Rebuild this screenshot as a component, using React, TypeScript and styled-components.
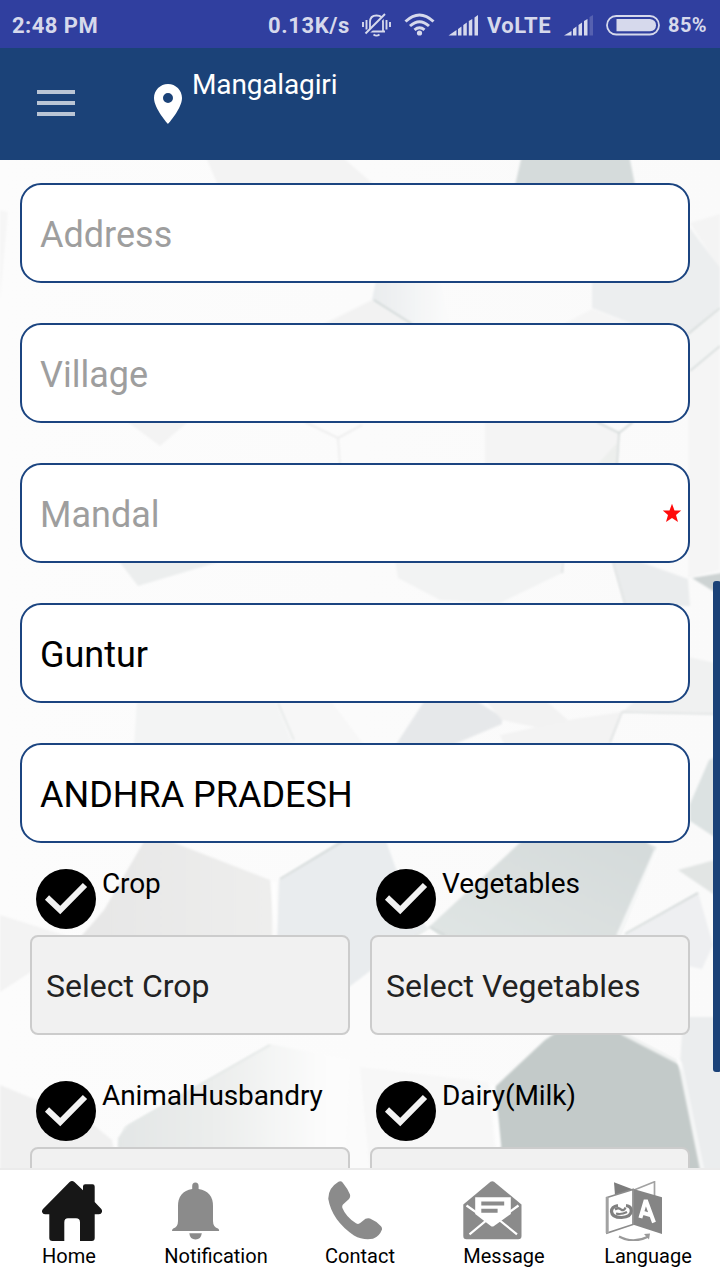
import React from "react";
import styled, { createGlobalStyle } from "styled-components";

const GlobalStyle = createGlobalStyle`
  * { box-sizing: border-box; }
  body { margin: 0; background: #fff; font-family: Roboto, "Liberation Sans", sans-serif; }
`;

const Screen = styled.div`
  width: 720px;
  height: 1280px;
  display: flex;
  flex-direction: column;
  overflow: hidden;
`;

const StatusBar = styled.header`
  height: 48px;
  flex: none;
  display: flex;
  align-items: center;
  padding: 2px 12px 0;
  background: #303f9f;
  color: #d6d9ec;
`;

const StatusText = styled.span<{ $size?: number; $width: number; $spacing?: number }>`
  flex: none;
  width: ${(p) => p.$width}px;
  font-size: ${(p) => p.$size ?? 22}px;
  font-weight: 700;
  letter-spacing: ${(p) => p.$spacing ?? 0.45}px;
  white-space: nowrap;
`;

const StatusIcons = styled.svg`
  flex: none;
  display: block;
  margin-top: -2px;
`;

const Spacer = styled.div`
  flex: 1;
`;

const AppBar = styled.div`
  height: 112px;
  flex: none;
  display: flex;
  align-items: flex-start;
  padding-left: 37px;
  background: #1b4278;
  color: #fff;
`;

const MenuButton = styled.div`
  display: flex;
  flex-direction: column;
  gap: 7px;
  width: 38px;
  margin-top: 42px;
`;

const MenuLine = styled.span`
  height: 4px;
  background: #bac5d5;
`;

const Pin = styled.svg`
  margin: 32px 0 0 69px;
`;

const Place = styled.span`
  font-size: 28px;
  line-height: 34px;
  margin-top: 20px;
  letter-spacing: -0.15px;
`;

const Content = styled.main`
  position: relative;
  flex: 1;
  min-height: 0;
  overflow: hidden;
  background: #fbfbfb;
`;

const Backdrop = styled.svg`
  position: absolute;
  inset: 0;
`;

const Form = styled.div`
  position: relative;
  padding: 23px 30px 0 20px;
`;

const Fields = styled.div`
  display: flex;
  flex-direction: column;
  gap: 40px;
`;

const Field = styled.div<{ $filled?: boolean }>`
  height: 100px;
  display: flex;
  align-items: center;
  justify-content: space-between;
  padding: 0 6px 0 18px;
  border: 2px solid #1b4480;
  border-radius: 21px;
  background: #fff;
  font-size: 36px;
  line-height: 42px;
  color: ${(p) => (p.$filled ? "#000" : "#9e9e9e")};

  span { margin-top: 4px; }
`;

const Options = styled.div`
  display: grid;
  grid-template-columns: 320px 320px;
  column-gap: 20px;
  row-gap: 46px;
  padding: 26px 0 0 10px;
`;

const OptionHead = styled.div`
  display: flex;
  align-items: flex-start;
  gap: 6px;
  height: 66px;
  padding-left: 6px;
  font-size: 28px;
  line-height: 30px;
  letter-spacing: -0.1px;
  color: #000;
`;

const Select = styled.div`
  height: 100px;
  display: flex;
  align-items: center;
  padding: 2px 14px 0;
  border: 2px solid #ccc;
  border-radius: 8px;
  background: #f1f1f1;
  color: #222;
  font-size: 32px;
`;

const ScrollThumb = styled.div`
  position: absolute;
  right: -1px;
  top: 421px;
  width: 8px;
  height: 491px;
  border-radius: 3px;
  background: #1b4278;
`;

const NavBar = styled.nav`
  height: 112px;
  flex: none;
  display: grid;
  grid-template-columns: repeat(5, 144px);
  justify-items: center;
  padding-top: 11px;
  border-top: 2px solid #ebebeb;
  background: #fff;
`;

const NavItem = styled.div`
  display: flex;
  flex-direction: column;
  align-items: flex-start;
  gap: 3px;
  font-size: 20px;
  line-height: 24px;
  color: #000;
`;

function Facets() {
  return (
    <Backdrop width="720" height="1008" viewBox="0 160 720 1008">
      <defs>
        <linearGradient id="fade" x1="0" x2="1">
          <stop offset="0" stopColor="#e3e6e6" />
          <stop offset="0.4" stopColor="#ebedec" />
          <stop offset="0.9" stopColor="#fcfcfc" />
        </linearGradient>
        <linearGradient id="cool" x1="0" x2="1">
          <stop offset="0" stopColor="#e9ecee" />
          <stop offset="1" stopColor="#fbfbfb" />
        </linearGradient>
        <linearGradient id="base" x1="0" x2="1">
          <stop offset="0" stopColor="#fcfcfc" />
          <stop offset="1" stopColor="#fafafa" />
        </linearGradient>
        <linearGradient id="veg" x1="0" x2="1" y1="1" y2="0">
          <stop offset="0" stopColor="#e0e5e4" />
          <stop offset="1" stopColor="#d4dada" />
        </linearGradient>
        <linearGradient id="crop" x1="0" x2="1">
          <stop offset="0" stopColor="#e6e6e6" />
          <stop offset="1" stopColor="#eeeeed" />
        </linearGradient>
        <filter id="soft"><feGaussianBlur stdDeviation="0.9" /></filter>
      </defs>
      <rect y="160" width="720" height="1008" fill="url(#base)" />
      <g filter="url(#soft)">
        <path d="M205 155H340L380 190H220Z" fill="#f3f3f3" />
        <path d="M522 155H629L636 190H514Z" fill="#d5dbdb" />
        <path d="M690 223L720 214V270Z" fill="#f4f4f4" />
        <path d="M592 270L690 228L720 268V307L686 338L630 323L592 308Z" fill="#eceeef" />
        <path d="M686 338L720 307V346L688 373Z" fill="#f3f4f4" />
        <path d="M560 326L592 309L635 326Z" fill="#f5f5f5" />
        <path d="M688 373L720 346V570L688 578Z" fill="#f5f5f5" />
        <path d="M376 280H440L450 326H412L372 300Z" fill="url(#cool)" />
        <path d="M320 326L372 300L412 326Z" fill="#f2f2f2" />
        <path d="M0 210L8 212L0 300Z" fill="#f6f6f6" />
        <path d="M485 420H595L619 433L617 465H485Z" fill="#f4f4f4" />
        <path d="M597 465L617 443V465Z" fill="#edefed" />
        <path d="M125 420H190L160 446Z" fill="#f3f3f3" />
        <path d="M118 560H225L138 586Z" fill="#eceeee" />
        <path d="M395 560H562L564 572L500 603L440 600L398 578Z" fill="#f2f3f3" />
        <path d="M612 560H635L688 579L690 606H625Z" fill="#eaeced" />
        <path d="M692 578L722 573V596L713 591Z" fill="#cdd3d3" />
        <path d="M688 657L720 664V714L622 712Z" fill="#f0f1f1" />
        <path d="M425 700H475L502 717V724L450 746H395Z" fill="#e6e8ea" />
        <path d="M485 700H545L568 720L545 729L502 720Z" fill="#f2f2f2" />
        <path d="M568 720L622 712L610 746H505L500 735Z" fill="#f3f3f3" />
        <path d="M137 700H275L293 746H134Z" fill="#f3f4f4" />
        <path d="M275 700H330L365 746H293Z" fill="#f7f7f7" />
        <path d="M690 804L709 760L722 754V842L690 821Z" fill="#dce2e2" />
        <path d="M146 838H162L270 880L276 940H78L104 910Z" fill="url(#crop)" />
        <path d="M279 880L345 838H385L400 880L427 928L345 990V940H277Z" fill="#e9ecee" />
        <path d="M525 838H640L656 850L618 940H445L429 927Z" fill="url(#veg)" />
        <path d="M678 870L722 858V900Z" fill="#e2e5e4" />
        <path d="M620 938L698 892L713 945L702 969L688 966Z" fill="#eeeff1" />
        <path d="M683 1017H722V1170H700L680 1065Z" fill="#ebedee" />
        <path d="M545 1040L560 1030H618L676 1060L682 1072L702 1172H503L495 1087Z" fill="#c3cac9" />
        <path d="M270 1044L128 1125L118 1138V1172H345L350 1060Z" fill="url(#fade)" />
        <path d="M0 1085L90 1122L112 1140L118 1172H0Z" fill="#f0f0f0" />
        <path d="M0 915L80 940L0 992Z" fill="#f3f3f3" />
        <path d="M360 1067L488 1082L497 1172H370Z" fill="#f7f7f7" />
      </g>
      <g fill="none" stroke="#d3d9d8" strokeWidth="1.6" filter="url(#soft)">
        <path d="M374 300L412 324M720 308L688 334M720 346L690 371" />
        <path d="M597 422L619 433L633 422M619 433L617 465" />
        <path d="M305 422L338 438L362 425M338 438L340 465" stroke="#ececec" />
        <path d="M613 562L625 604M563 562L562 573M610 742L622 712L716 714" stroke="#dfe2e2" />
        <path d="M280 879L345 840M430 927L445 935M656 848L640 842M625 934L698 893" />
        <path d="M415 936L430 927M270 1045L125 1128L119 1146M278 703L294 740" stroke="#e4e8e7" />
      </g>
      <g fill="none" stroke="#fff" strokeWidth="4" strokeOpacity="0.7" filter="url(#soft)">
        <path d="M274 882V940M656 850L618 936M622 1033L680 1063L702 1170M493 1085L499 1147" />
      </g>
    </Backdrop>
  );
}

function CheckMark() {
  return (
    <svg width="60" height="60" viewBox="0 0 60 60">
      <circle cx="30" cy="30" r="30" fill="#000" />
      <path d="M11 28.5L24.2 41L49 16" fill="none" stroke="#f2f2f2" strokeWidth="6" />
    </svg>
  );
}

const iconProps = { width: 60, height: 60, viewBox: "0 0 60 60" };

function HomeIcon() {
  return (
    <svg {...iconProps} fill="#171717">
      <path d="M27.6 1Q30 -0.8 32.4 1L41 9.3V5.5Q41 3.3 43.2 3.3H50.5Q52.7 3.3 52.7 5.5V21L59.3 28Q60.3 29.3 60 31Q59.2 33.2 57 33.2H52.7V57Q52.7 60 49.8 60H38V41.5Q38 37.3 34 37.3H26Q22.3 37.3 22.3 41.5V60H10.5Q7.3 60 7.3 57V33.2H3Q0.8 33.2 0 31Q-0.2 29.3 1 28Z" />
    </svg>
  );
}

function BellIcon() {
  return (
    <svg {...iconProps} fill="#8b8b8b">
      <path d="M28.2 8V5Q28.2 1.5 31.4 1.5T34.6 5V8Q49 10.5 49 25V40Q49 46 54 47.5Q55.2 48 55.2 50H8Q8 48 9.2 47.5Q14 46 14 40V25Q14 10.5 28.2 8Z" />
      <path d="M25.3 52.3H37.8Q37 58.5 31.5 58.5T25.3 52.3Z" />
    </svg>
  );
}

function PhoneIcon() {
  return (
    <svg {...iconProps} fill="#8b8b8b">
      <path d="M13.5 0.7Q16 -0.4 17.6 1.6Q22.8 8 25 13.6Q25.6 16 24 18L18 23.6Q16.8 25 17.4 27Q21 36 31 42.3Q33.5 43.7 35.5 41.8L40.5 37.8Q42.5 36.8 45 37.4Q51 39.8 56 45.2Q57.2 46.4 57 48.5Q54.4 55.5 48 57.8Q38 59.6 29 54.5Q7 39.5 3.3 18Q3 7 13.5 0.7Z" />
    </svg>
  );
}

function MessageIcon() {
  return (
    <svg {...iconProps}>
      <path d="M27.5 0.7Q29.3 -0.3 31 0.7L58.5 23.5V55Q58.5 58.3 55.2 58.3H3.4Q0.3 58.3 0.3 55V23.5Z" fill="#8b8b8b" />
      <path d="M12.2 16.2H47.8V33L31 45Q29.3 46 27.8 45L12.2 33Z" fill="#fff" />
      <path d="M18.3 20.4H41.2V24.4H18.3ZM18.3 27.8H34.6V31.8H18.3Z" fill="#8b8b8b" />
      <path d="M3.5 24.5L24 38.8L6.5 53.3M55.5 24.5L36 38.8L54 53.3" fill="none" stroke="#fff" strokeWidth="2.2" />
    </svg>
  );
}

function LanguageIcon() {
  return (
    <svg {...iconProps}>
      <path d="M10 1.2L29 8.5L11 14.5Z" fill="#7c7c7c" />
      <path d="M30 9L50.5 0.8V16.5" fill="none" stroke="#a2a2a2" strokeWidth="1.7" />
      <path d="M3 16.5L29 8.5V43.5L3 52Z" fill="#fff" stroke="#8b8b8b" strokeWidth="1.7" />
      <path d="M3.2 16V52" stroke="#a2a2a2" strokeWidth="3" />
      <path d="M29.5 8L58 16.2V53L29.5 43.8Z" fill="#858585" />
      <g fill="none" stroke="#808080">
        <path d="M14 24.5Q7.5 25.5 7.5 30.5Q8 36.5 17.5 36.5Q27 36 27.3 30Q27.2 25 22 24.5" strokeWidth="3.2" />
        <path d="M11 28.5Q14.5 26 17 28.5Q20 30.5 21.5 26.5M12 32.5Q17 34 23 31" strokeWidth="2.2" />
      </g>
      <path d="M36.4 37L41.3 20.5H42.3L50 41.5M38 31.5L46.5 34.2" fill="none" stroke="#fff" strokeWidth="4" />
      <path d="M15 55.5Q29 63 44 55.7" fill="none" stroke="#999" strokeWidth="2.2" />
      <path d="M40 53L46 52.5L45 58.5Z" fill="#999" />
    </svg>
  );
}

const fields = [
  { text: "Address" },
  { text: "Village" },
  { text: "Mandal", required: true },
  { text: "Guntur", filled: true },
  { text: "ANDHRA PRADESH", filled: true },
];

const options = [
  { name: "Crop", prompt: "Select Crop" },
  { name: "Vegetables", prompt: "Select Vegetables" },
  { name: "AnimalHusbandry", prompt: "" },
  { name: "Dairy(Milk)", prompt: "" },
];

const navItems = [
  { label: "Home", Icon: HomeIcon },
  { label: "Notification", Icon: BellIcon },
  { label: "Contact", Icon: PhoneIcon },
  { label: "Message", Icon: MessageIcon },
  { label: "Language", Icon: LanguageIcon },
];

export default function App() {
  return (
    <>
      <GlobalStyle />
      <Screen>
        <StatusBar>
          <StatusText $width={100}>2:48 PM</StatusText>
          <Spacer />
          <StatusText $width={92} $spacing={0.6}>0.13K/s</StatusText>
          <StatusIcons width="127" height="46" viewBox="360 0 127 46" fill="none" stroke="#d6d9ec">
            <path d="M367.5 30.5H385M370 30V21Q370 14.5 376.5 14.5T383 21V30M373.5 33.5Q376.5 35.8 379.5 33.5" strokeWidth="1.8" />
            <path d="M366 34L387 12.5" stroke="#303f9f" strokeWidth="3" />
            <path d="M365.5 32.5L385 13" strokeWidth="1.9" />
            <path d="M363 21V26M366.5 19V28.5M386.5 19V28.5M390 21V26" strokeWidth="1.9" />
            <path d="M405.5 20.5Q419.5 7.5 433.5 20.5M410 25Q419.5 16.5 429 25M414.5 28.8Q419.5 24.7 424.5 28.8" strokeWidth="3" />
            <circle cx="419.5" cy="32" r="2.6" fill="#d6d9ec" stroke="none" />
            <path d="M448.5 34.5L456.5 29V34.5ZM458 28L461.5 25.5V34.5H458ZM463.3 24L466.8 21.5V34.5H463.3ZM468.8 20L472.3 18V34.5H468.8ZM474.5 16.5L478 14V34.5H474.5Z" fill="#d6d9ec" stroke="none" />
          </StatusIcons>
          <StatusText $width={64}>VoLTE</StatusText>
          <StatusIcons width="117" height="46" viewBox="551 0 117 46" fill="none" stroke="#d6d9ec">
            <path d="M564 34.5L571.5 30V34.5ZM573 28L576.5 25.5V34.5H573ZM578.5 24L582 21.5V34.5H578.5ZM584 20L587.5 18V34.5H584Z" fill="#d6d9ec" stroke="none" />
            <path d="M589.5 16L593 14V34.5H589.5Z" fill="#5661b0" stroke="none" />
            <rect x="607" y="15" width="52" height="18.5" rx="9.2" strokeWidth="1.8" />
            <path d="M616.5 18H650Q656 18.8 656 24.2T650 30.3H616.5Z" fill="#d6d9ec" stroke="none" />
          </StatusIcons>
          <StatusText $width={40} $size={20}>85%</StatusText>
        </StatusBar>

        <AppBar>
          <MenuButton>
            <MenuLine />
            <MenuLine />
            <MenuLine />
          </MenuButton>
          <Pin width="48" height="48" viewBox="0 0 24 24" fill="#fff">
            <path d="M12 2C8.13 2 5 5.13 5 9c0 5.25 7 13 7 13s7-7.75 7-13c0-3.87-3.13-7-7-7zm0 9.5a2.5 2.5 0 0 1 0-5 2.5 2.5 0 0 1 0 5z" />
          </Pin>
          <Place>Mangalagiri</Place>
        </AppBar>

        <Content>
          <Facets />
          <Form>
            <Fields>
              {fields.map((f) => (
                <Field key={f.text} $filled={f.filled}>
                  <span>{f.text}</span>
                  {f.required && (
                    <svg width="20" height="20" viewBox="0 0 20 20">
                      <path d="M10 0.8L12.5 7.5H19.2L14 12L16 19L10 15L4 19L6 12L0.8 7.5H7.5Z" fill="#ff0a0a" />
                    </svg>
                  )}
                </Field>
              ))}
            </Fields>
            <Options>
              {options.map((o) => (
                <div key={o.name}>
                  <OptionHead>
                    <CheckMark />
                    <span>{o.name}</span>
                  </OptionHead>
                  <Select>{o.prompt}</Select>
                </div>
              ))}
            </Options>
          </Form>
          <ScrollThumb />
        </Content>

        <NavBar>
          {navItems.map(({ label, Icon }) => (
            <NavItem key={label}>
              <Icon />
              <span>{label}</span>
            </NavItem>
          ))}
        </NavBar>
      </Screen>
    </>
  );
}
